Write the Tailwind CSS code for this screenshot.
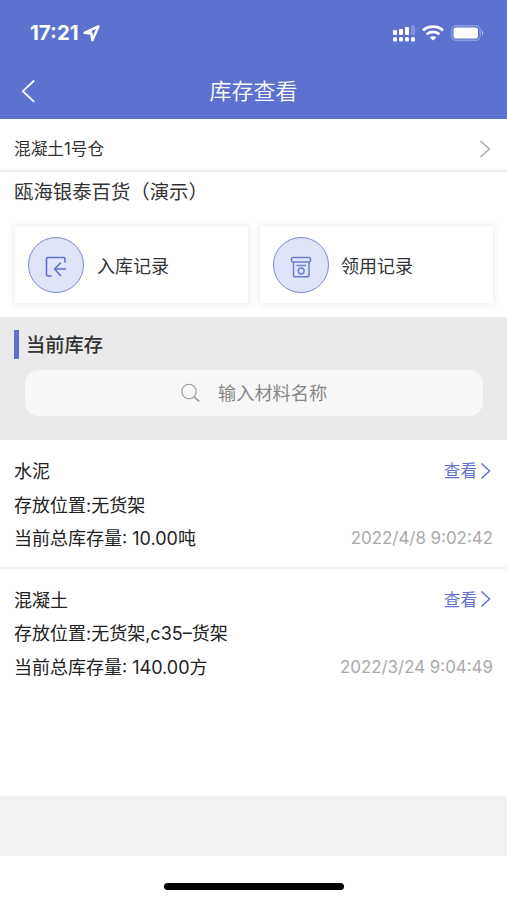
<!DOCTYPE html>
<html lang="zh-CN">
<head>
    <meta charset="UTF-8">
    <meta name="viewport" content="width=device-width, initial-scale=1.0">
    <title>库存查看</title>
    <script src="https://cdn.jsdelivr.net/npm/@tailwindcss/browser@4"></script>
</head>
<body class="bg-white font-['Inter','Noto_Sans_CJK_SC',sans-serif] text-[#333]">
    <div class="flex flex-col h-[900px] w-[507px] overflow-hidden">
        <!-- Header -->
        <header class="h-[119px] shrink-0 bg-[#5b72ce] text-white">
            <!-- Status Bar -->
            <div class="flex justify-between items-center h-[66px] pl-[30px] pr-[23px]">
                <div class="flex items-center gap-1">
                    <span class="text-[20.5px] leading-6 font-bold">17:21</span>
                    <svg class="w-[17px] h-[17px]" viewBox="0 0 17 17" fill="none" stroke="currentColor" stroke-width="2.5" stroke-linejoin="round">
                        <path d="M15.4 1.4L1.5 7.8L8.3 8.6L9.4 15.3Z" />
                        <path d="M2 7.8L8.3 8.6L9 6Z" fill="currentColor" stroke="none" />
                    </svg>
                </div>
                <div class="flex items-center">
                    <svg class="w-[23px] h-[17px]" viewBox="0 0 23 17" fill="currentColor">
                        <rect x="0" y="5" width="4" height="5" rx="1" />
                        <rect x="6" y="4" width="4" height="6" rx="1" />
                        <rect x="12" y="2" width="4" height="8" rx="1" />
                        <rect x="18" y="0.5" width="4" height="9.5" rx="1" opacity="0.25" />
                        <rect x="0" y="12" width="4" height="4.5" rx="1.5" />
                        <rect x="6" y="12" width="4" height="4.5" rx="1.5" />
                        <rect x="12" y="12" width="4" height="4.5" rx="1.5" />
                        <rect x="18" y="12" width="4" height="4.5" rx="1.5" />
                    </svg>
                    <svg class="w-[22px] h-4 ml-[6px] mr-px" viewBox="0 0 22 16" fill="none" stroke="currentColor" stroke-width="2.8">
                        <path d="M1 5.4C6.6 0.4 15.4 0.4 21 5.4" />
                        <path d="M4.6 9.3C8.2 6 13.8 6 17.4 9.3" />
                        <path d="M11 15.6L7.8 12.4C9.6 10.8 12.4 10.8 14.2 12.4Z" fill="currentColor" stroke="none" />
                    </svg>
                    <svg class="w-[33px] h-4 ml-[6px]" viewBox="0 0 33 16">
                        <rect x="0.75" y="0.75" width="28.5" height="14.5" rx="4.5" fill="none" stroke="#fff" stroke-opacity="0.3" stroke-width="1.3" />
                        <rect x="2.5" y="2.5" width="24.5" height="11" rx="2.8" fill="#fff" />
                        <path d="M31 5.5C32.8 6.3 32.8 9.7 31 10.5Z" fill="#fff" fill-opacity="0.5" />
                    </svg>
                </div>
            </div>
            <!-- Title -->
            <div class="grid grid-cols-3 items-center h-[50px] px-5">
                <svg class="w-4 h-6" viewBox="0 0 16 24" fill="none" stroke="currentColor" stroke-width="1.8">
                    <path d="M14.2 1.5L2.8 12.2L14.2 22.8" />
                </svg>
                <h1 class="text-center text-[22px] leading-8 font-[350]">库存查看</h1>
            </div>
        </header>

        <!-- Warehouse -->
        <div class="flex justify-between items-center h-[53px] shrink-0 border-b-2 border-[#eee] pl-3.5 pr-4 pt-2">
            <span class="text-[16.7px] leading-6">混凝土1号仓</span>
            <svg class="w-3 h-[18px]" viewBox="0 0 12 18" fill="none" stroke="#aaa" stroke-width="1.5">
                <path d="M1.5 1L10.5 9L1.5 17" />
            </svg>
        </div>

        <!-- Project and Records -->
        <div class="h-[145px] shrink-0 px-3.5 pt-[5px]">
            <h2 class="text-[19.4px] leading-[30px]">瓯海银泰百货（演示）</h2>
            <div class="flex gap-3 mt-[19px]">
                <button class="flex items-center gap-[13px] w-[233px] h-[77px] ml-px pl-[13px] bg-white shadow-[0_0_6px_2px_rgba(0,0,0,0.06)]">
                    <span class="flex items-center justify-center size-14 rounded-full border-[1.5px] border-[#7a86d2] bg-[#dfe4f8] pt-1">
                        <svg class="w-[22px] h-[22px]" viewBox="0 0 22 22" fill="none" stroke="#5f72cf" stroke-width="1.6" stroke-linecap="round" stroke-linejoin="round">
                            <path d="M20 6V3Q20 1.5 18.5 1.5H3Q1.5 1.5 1.5 3V18.5Q1.5 20 3 20H6" />
                            <path d="M15.5 7L9.5 13L15.5 19.5M9.5 13H20.5" />
                        </svg>
                    </span>
                    <span class="text-[18px] pt-[3px]">入库记录</span>
                </button>
                <button class="flex items-center gap-[12px] w-[233px] h-[77px] pl-[13px] bg-white shadow-[0_0_6px_2px_rgba(0,0,0,0.06)]">
                    <span class="flex items-center justify-center size-14 rounded-full border-[1.5px] border-[#7a86d2] bg-[#dfe4f8] pt-1">
                        <svg class="w-[22px] h-[22px]" viewBox="0 0 22 22" fill="none" stroke="#6f7fd0" stroke-width="1.5" stroke-linejoin="round">
                            <rect x="1.5" y="1.5" width="19" height="4.5" rx="1.5" />
                            <path d="M3.5 6V19Q3.5 20.8 5.3 20.8H17.2Q19 20.8 19 19V6" />
                            <path d="M6.5 9.5H16" />
                            <circle cx="11.2" cy="15" r="2.9" />
                        </svg>
                    </span>
                    <span class="text-[18px] pt-[3px]">领用记录</span>
                </button>
            </div>
        </div>

        <!-- Current Stock -->
        <section class="h-[123px] shrink-0 bg-[#eaeaea] pt-[13px]">
            <div class="flex items-center h-[29px] ml-3.5 border-l-[5px] border-[#5f6fce] pl-[7px]">
                <h3 class="text-[19.3px] leading-7 font-medium">当前库存</h3>
            </div>
            <div class="flex items-center h-[46px] mt-[11px] ml-[25px] mr-6 pl-[156px] gap-[17px] rounded-[14px] bg-[#f7f7f7]">
                <svg class="w-5 h-5" viewBox="0 0 20 20" fill="none" stroke="#999" stroke-width="1.1">
                    <circle cx="8" cy="8.5" r="7.2" />
                    <path d="M13.3 13.8L18.3 18.5" stroke-width="1.6" />
                </svg>
                <span class="text-[18.2px] leading-7 text-[#888]">输入材料名称</span>
            </div>
        </section>

        <!-- Stock List -->
        <div class="flex-1 text-[18px] leading-[33.5px] text-[#222]">
            <div class="h-[129px] px-3.5 pt-[15px] border-b-2 border-[#f0f0f0]">
                <div class="flex justify-between">
                    <span>水泥</span>
                    <a class="flex items-center gap-[3px] pr-[2px] text-[16.6px] text-[#5f72cf]">查看
                        <svg class="w-[11px] h-[18px] mb-0.5" viewBox="0 0 11 18" fill="none" stroke="currentColor" stroke-width="1.5">
                            <path d="M1.5 1.5L9.5 9L1.5 16.5" />
                        </svg>
                    </a>
                </div>
                <div>存放位置:无货架</div>
                <div class="flex justify-between">
                    <span>当前总库存量: 10.00吨</span>
                    <span class="text-[16.9px] text-[#aaa]">2022/4/8 9:02:42</span>
                </div>
            </div>
            <div class="h-[129px] px-3.5 pt-[14.5px]">
                <div class="flex justify-between">
                    <span>混凝土</span>
                    <a class="flex items-center gap-[3px] pr-[2px] text-[16.6px] text-[#5f72cf]">查看
                        <svg class="w-[11px] h-[18px] mb-0.5" viewBox="0 0 11 18" fill="none" stroke="currentColor" stroke-width="1.5">
                            <path d="M1.5 1.5L9.5 9L1.5 16.5" />
                        </svg>
                    </a>
                </div>
                <div>存放位置:无货架,c35–货架</div>
                <div class="flex justify-between">
                    <span>当前总库存量: 140.00方</span>
                    <span class="text-[16.9px] text-[#aaa]">2022/3/24 9:04:49</span>
                </div>
            </div>
        </div>

        <!-- Bottom -->
        <div class="h-[60px] shrink-0 bg-[#f1f1f1]"></div>
        <div class="flex justify-center h-11 shrink-0 pt-[27px] pl-px">
            <div class="w-[180px] h-[7px] rounded-full bg-black"></div>
        </div>
    </div>
</body>
</html>
